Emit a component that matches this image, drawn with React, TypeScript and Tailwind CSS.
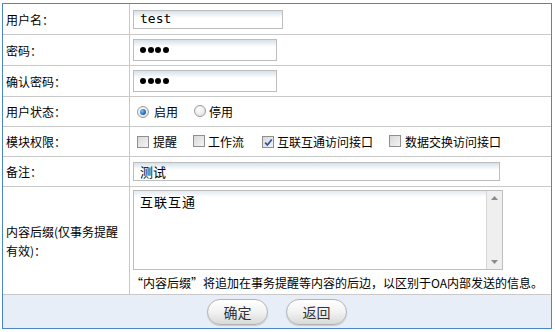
import React from "react";

const font = "font-['Noto_Sans_CJK_SC','Noto_Sans_CJK_JP',sans-serif]";

/* ── small form bits ───────────────────────────────────────── */

function Radio({ checked }: { checked?: boolean }) {
  return (
    <span className="relative inline-flex h-[12px] w-[12px] shrink-0 items-center justify-center rounded-full border border-[#9a9a9a] bg-[radial-gradient(circle_at_40%_35%,#ffffff,#dcdcdc)]">
      {checked && (
        <span className="h-[6px] w-[6px] rounded-full bg-[radial-gradient(circle_at_35%_35%,#7fc3f2,#1261b5_70%,#0b3f7d)]" />
      )}
    </span>
  );
}

function Check({ checked }: { checked?: boolean }) {
  return (
    <span className="inline-flex h-[12px] w-[12px] shrink-0 items-center justify-center border border-[#8e8f8f] bg-[linear-gradient(135deg,#d8d8d8,#f4f4f4)]">
      {checked && (
        <svg width="9" height="9" viewBox="0 0 9 9">
          <path d="M1.2 4.6 L3.4 7 L7.8 1.6" fill="none" stroke="#2a4d9e" strokeWidth="1.6" />
        </svg>
      )}
    </span>
  );
}

function Dots() {
  return (
    <div className="flex items-center gap-[1.5px]">
      {[0, 1, 2, 3].map((i) => (
        <span key={i} className="h-[6px] w-[6px] rounded-full bg-black" />
      ))}
    </div>
  );
}

const inputCls =
  "flex items-center border border-[#bdbdbd] bg-[linear-gradient(#d7e1ea,#ffffff_7px)] px-[6px] text-[13px] text-black";

function Row({
  label,
  h,
  children,
}: {
  label: React.ReactNode;
  h: string;
  children: React.ReactNode;
}) {
  return (
    <div className={`flex border-b border-[#c9c9c9] ${h}`}>
      <div className="flex w-[127px] shrink-0 items-center border-r border-[#c9c9c9] pl-[3px] text-[12px] leading-[19px] text-black">
        {label}
      </div>
      <div className="flex min-w-0 flex-1 items-center pl-[3px]">{children}</div>
    </div>
  );
}

function Button({ text }: { text: string }) {
  return (
    <button className="h-[26px] w-[61px] rounded-full border border-[#b4b4b4] bg-[linear-gradient(#ffffff,#f2f2f2_50%,#d9d9d9)] text-[14px] leading-none text-[#333] shadow-[0_1px_1px_rgba(0,0,0,0.15)]">
      {text}
    </button>
  );
}

/* ── page ─────────────────────────────────────────────────── */

export default function App() {
  return (
    <div className={`h-[332px] w-[555px] bg-white pl-[2px] pt-[3px] ${font}`}>
      <div className="w-[550px] border border-[#4a86c8]">
        <Row label="用户名：" h="h-[31px]">
          <div className={`${inputCls} h-[19px] w-[150px] font-['DejaVu_Sans_Mono',monospace] text-[11px]`}>test</div>
        </Row>
        <Row label="密码：" h="h-[31px]">
          <div className={`${inputCls} h-[22px] w-[144px]`}>
            <Dots />
          </div>
        </Row>
        <Row label="确认密码：" h="h-[31px]">
          <div className={`${inputCls} h-[22px] w-[144px]`}>
            <Dots />
          </div>
        </Row>
        <Row label="用户状态：" h="h-[30px]">
          <div className="flex items-center pl-[4px] text-[12px] text-black">
            <Radio checked />
            <span className="ml-[5px]">启用</span>
            <span className="ml-[16px]">
              <Radio />
            </span>
            <span className="ml-[3px]">停用</span>
          </div>
        </Row>
        <Row label="模块权限：" h="h-[30px]">
          <div className="flex items-center pl-[4px] text-[12px] text-black">
            <Check />
            <span className="ml-[4px]">提醒</span>
            <span className="ml-[16px]">
              <Check />
            </span>
            <span className="ml-[3px]">工作流</span>
            <span className="ml-[18px]">
              <Check checked />
            </span>
            <span className="ml-[3px]">互联互通访问接口</span>
            <span className="ml-[16px]">
              <Check />
            </span>
            <span className="ml-[4px]">数据交换访问接口</span>
          </div>
        </Row>
        <Row label="备注：" h="h-[30px]">
          <div className={`${inputCls} h-[19px] w-[367px]`}>测试</div>
        </Row>
        <Row
          label={
            <span>
              内容后缀(仅事务提醒
              <br />
              有效)：
            </span>
          }
          h="h-[108px]"
        >
          <div className="flex flex-col">
            <div className="flex h-[80px] w-[370px] border border-[#bdbdbd] bg-[linear-gradient(#e1e9f0,#ffffff_6px)]">
              <div className="flex-1 px-[6px] pt-[2px] text-[13px] leading-[18px] tracking-[1px] text-black">互联互通</div>
              <div className="flex w-[16px] flex-col items-center justify-between border-l border-[#d6d6d6] bg-[#efefef] py-[5px]">
                <svg width="7" height="4" viewBox="0 0 7 4">
                  <path d="M0 4 L3.5 0 L7 4 Z" fill="#8a8a8a" />
                </svg>
                <svg width="7" height="4" viewBox="0 0 7 4">
                  <path d="M0 0 L3.5 4 L7 0 Z" fill="#8a8a8a" />
                </svg>
              </div>
            </div>
            <div className="mt-[4px] -ml-[2px] text-[12px] leading-[18px] text-black">
              “内容后缀”将追加在事务提醒等内容的后边，以区别于OA内部发送的信息。
            </div>
          </div>
        </Row>
        <div className="flex h-[33px] items-center justify-center gap-[18px] bg-[#e7eef8]">
          <Button text="确定" />
          <Button text="返回" />
        </div>
      </div>
    </div>
  );
}
